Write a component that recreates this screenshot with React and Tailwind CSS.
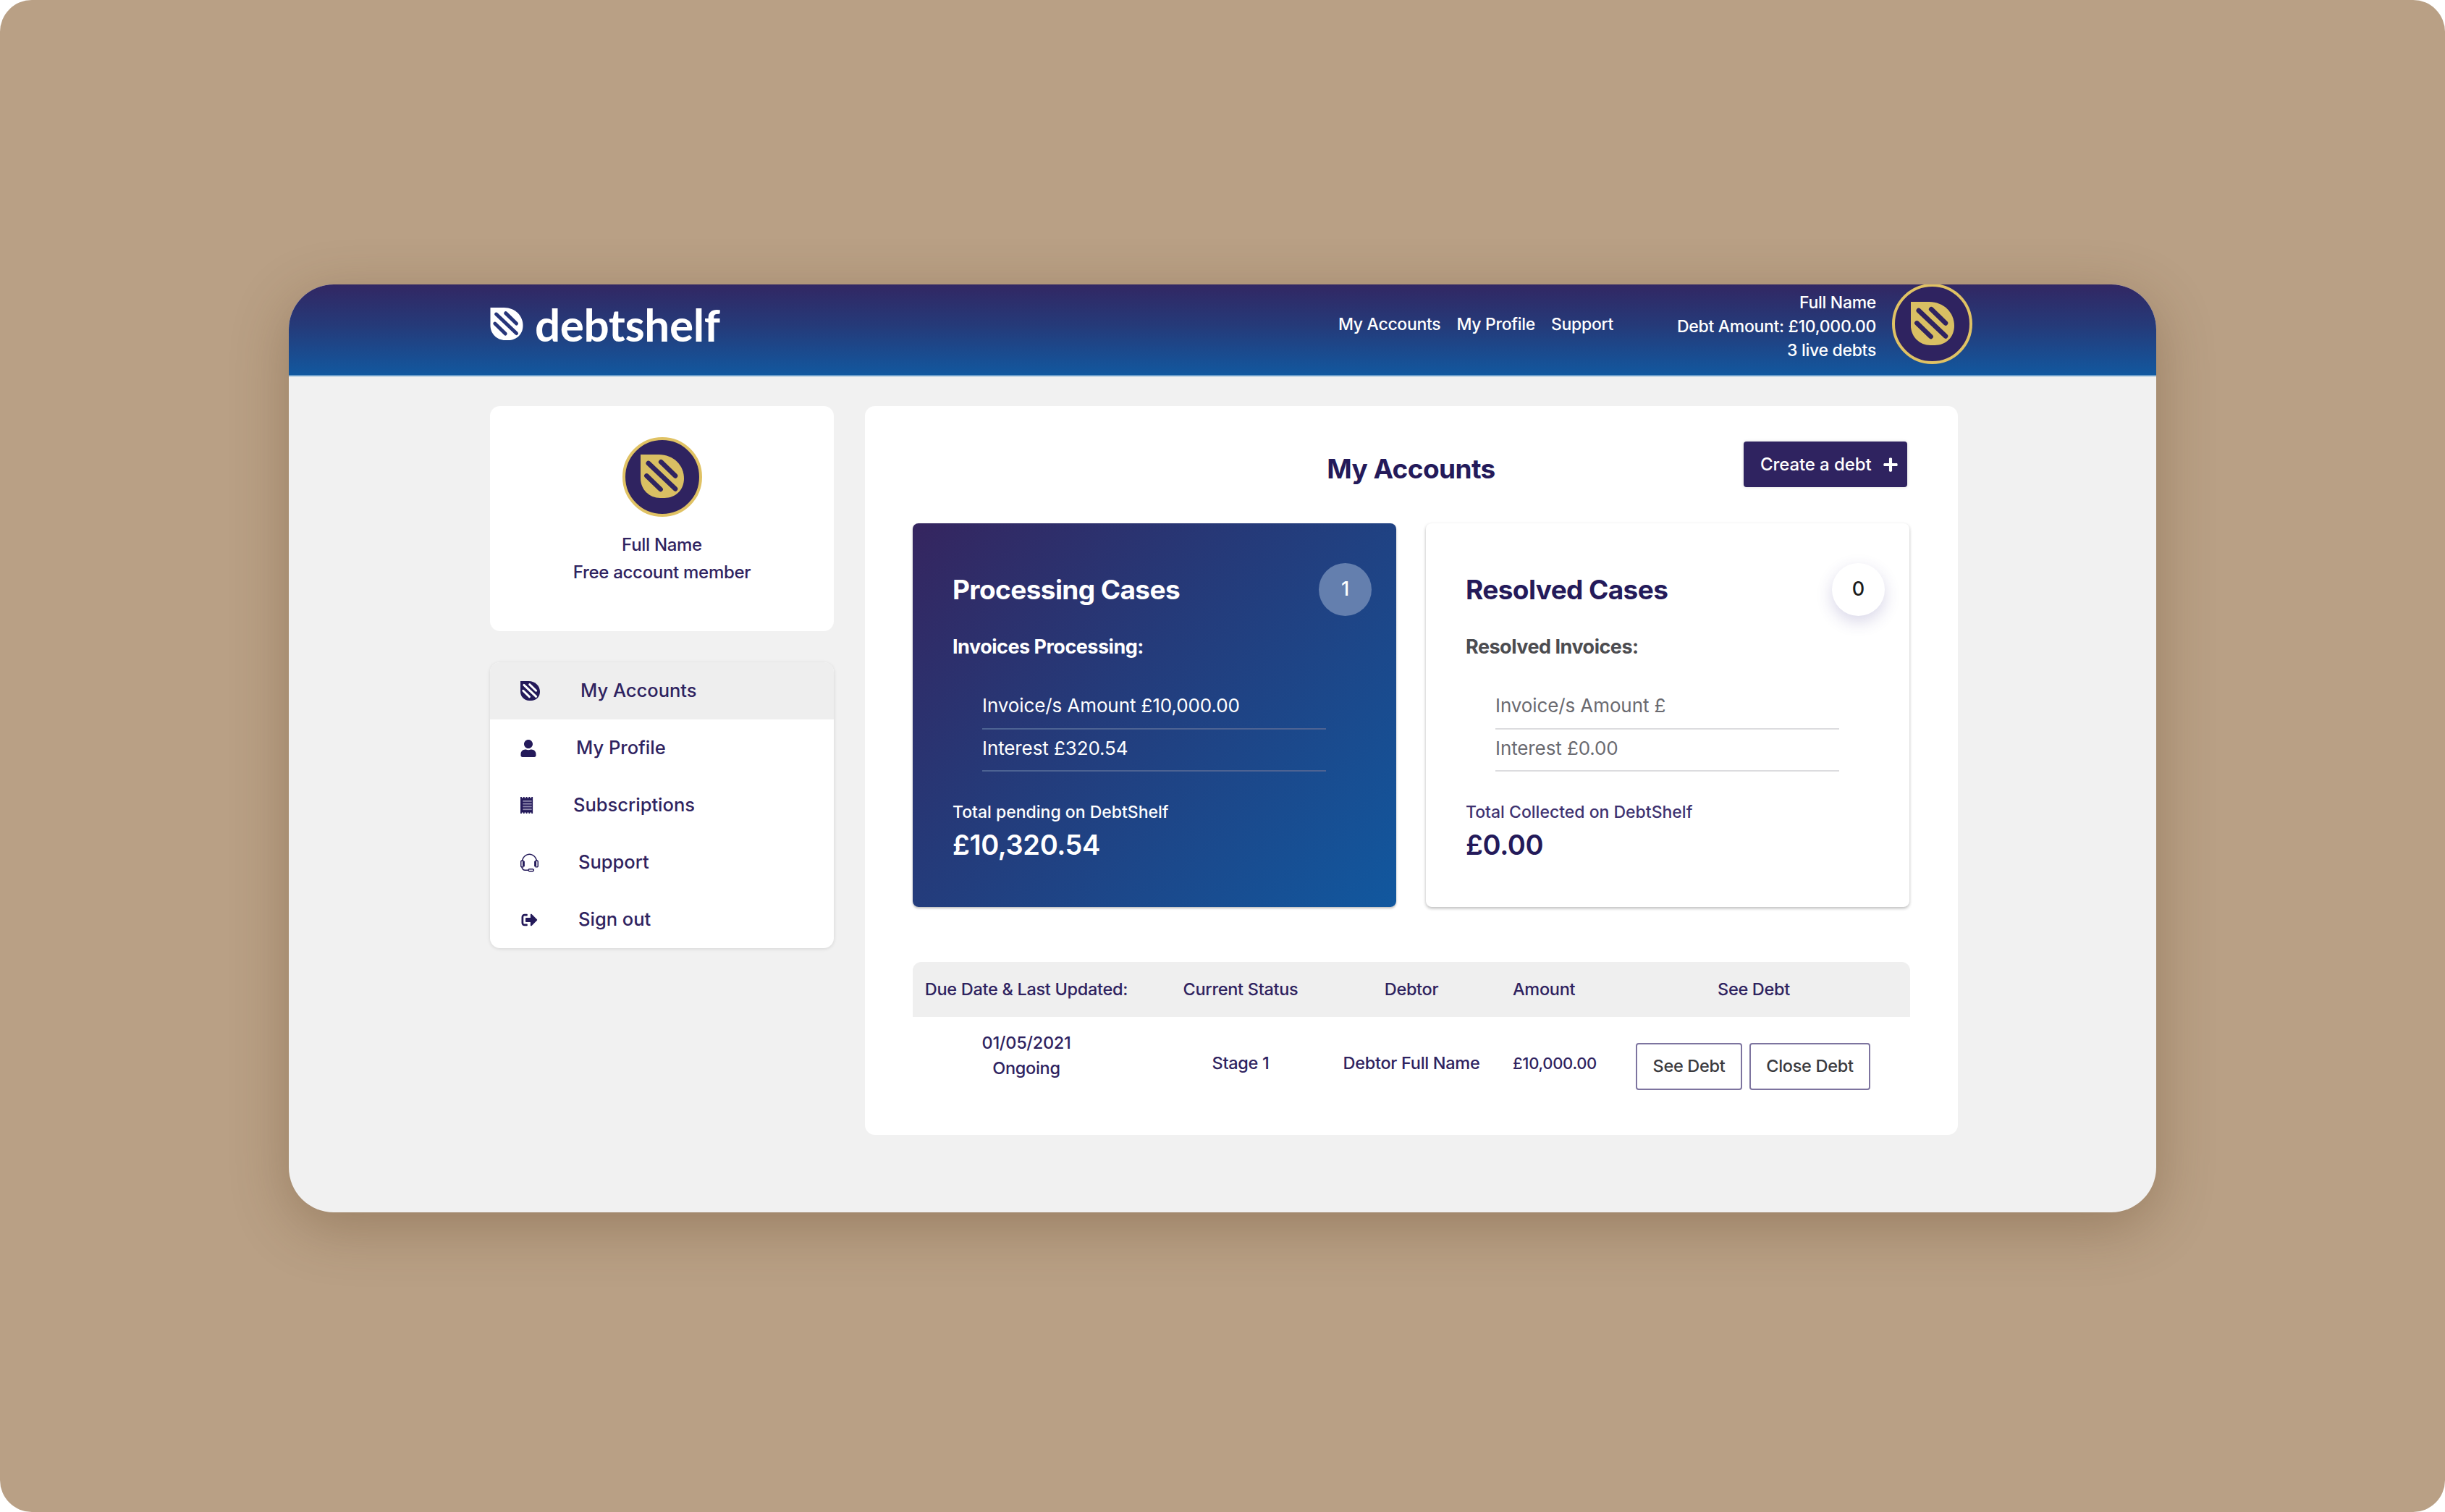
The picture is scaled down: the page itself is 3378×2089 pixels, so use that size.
import { FaUser, FaSignOutAlt, FaPlus } from "react-icons/fa";
import { TfiHeadphoneAlt } from "react-icons/tfi";

function Mark({ className, fill = "currentColor", stripe = "#2f2360" }) {
    return (
        <svg viewBox="0 0 100 100" className={className}>
            <path d="M0 0H42C76 0 100 25 100 55C100 82 80 100 55 100H45C20 100 0 80 0 55Z" fill={fill} />
            <g stroke={stripe} strokeWidth="11" strokeLinecap="round">
                <path d="M18 20L80 79" />
                <path d="M47 17L80 49" />
                <path d="M14 49L46 80" />
            </g>
        </svg>
    );
}

function Avatar({ className }) {
    return (
        <div className={`flex items-center justify-center rounded-full border-[4px] border-[#e0c264] bg-[#2f2360] ${className}`}>
            <Mark className="w-[60px] h-[62px] -translate-y-[1px]" fill="#d9bf63" />
        </div>
    );
}

function ReceiptIcon({ className }) {
    return (
        <svg viewBox="0 0 20 24" className={className} fill="currentColor">
            <path d="M0 0h2v1.500h2V0h2v1.500h2V0h2v1.500h2V0h2v1.500h2V0h2v24h-2v-1.500h-2V24h-2v-1.500h-2V24H8v-1.500H6V24H4v-1.500H2V24H0z" />
            <g fill="#8f89ad">
                <rect x="3.500" y="5" width="13" height="2" />
                <rect x="3.500" y="9" width="13" height="2" />
                <rect x="3.500" y="13" width="13" height="2" />
                <rect x="3.500" y="17" width="13" height="2" />
            </g>
        </svg>
    );
}

const menu = [
    { label: "My Accounts", text: "ml-[55px]", icon: <Mark className="w-[27px] h-[27px]" fill="#241a5a" stripe="#ffffff" /> },
    { label: "My Profile", text: "ml-[49px]", icon: <FaUser className="w-[22px] h-[24px]" /> },
    { label: "Subscriptions", text: "ml-[45px]", icon: <ReceiptIcon className="w-[19px] h-[25px]" /> },
    { label: "Support", text: "ml-[52px]", icon: <TfiHeadphoneAlt className="w-[25px] h-[26px]" /> },
    { label: "Sign out", text: "ml-[52px]", icon: <FaSignOutAlt className="w-[25px] h-[22px]" /> },
];

function CaseCard({ title, sub, amount, interest, totalLabel, total, count, dark }) {
    return (
        <div className={`relative w-[668px] h-[530px] rounded-[8px] pl-[55px] ${dark
            ? "bg-[linear-gradient(135deg,#35255f_0%,#253a79_40%,#11589f_100%)] text-white shadow-[0_2px_3px_rgba(0,0,0,0.25)]"
            : "bg-white text-[#241a5a] shadow-[0_2px_4px_rgba(0,0,0,0.28)]"}`}>
            <div className={`absolute right-[34px] top-[55px] w-[73px] h-[73px] rounded-full flex items-center justify-center text-[27px] font-medium ${dark
                ? "bg-[#647fae] text-white"
                : "bg-white text-[#1c1c1c] shadow-[0_8px_22px_rgba(60,50,140,0.2)]"}`}>
                {count}
            </div>
            <h3 className="pt-[68px] h-[132px] text-[37px] leading-[48px] font-bold tracking-[-0.6px]">{title}</h3>
            <p className={`h-[94px] pt-[23px] text-[27px] leading-[32px] font-bold tracking-[-0.5px] ${dark ? "" : "text-[#4c4c50]"}`}>{sub}</p>
            <div className={`ml-[41px] w-[475px] text-[26px] tracking-[-0.1px] ${dark ? "" : "text-[#6a6a70]"}`}>
                <div className={`h-[59px] pt-[10px] leading-[32px] border-b-[2px] ${dark ? "border-[#4d6393]" : "border-[#dcdcdf]"}`}>{amount}</div>
                <div className={`h-[58px] pt-[10px] leading-[32px] border-b-[2px] ${dark ? "border-[#4d6393]" : "border-[#dcdcdf]"}`}>{interest}</div>
            </div>
            <p className={`mt-[42px] text-[23px] leading-[28px] font-medium ${dark ? "" : "text-[#3e3270]"}`}>{totalLabel}</p>
            <p className="mt-[7px] text-[38px] leading-[48px] font-semibold tracking-[-0.4px]">{total}</p>
        </div>
    );
}

export default function App() {
    return (
        <div className="w-full h-[2089px] overflow-hidden rounded-[44px] bg-[#b9a085] pt-[393px] font-['Inter',sans-serif] text-[#2f2360]">
            <div className="mx-auto w-[2580px] h-[1282px] rounded-[62px] bg-[#f1f1f1] shadow-[0_20px_80px_rgba(80,50,20,0.3)]">
                <div className="h-full rounded-[62px] overflow-hidden">
                    <header className="h-[127px] pl-[278px] pr-[254px] flex items-center bg-[linear-gradient(180deg,#322763_0%,#253a79_45%,#12589f_100%)] border-b-[2px] border-[#6a9cc8] text-white">
                        <div className="flex items-center gap-[16px] -mt-[16px]">
                            <Mark className="w-[46px] h-[45px]" fill="#ffffff" stripe="#27357a" />
                            <span className="font-['Lato',sans-serif] text-[62px] leading-[58px] font-bold tracking-[-0.4px]">debtshelf</span>
                        </div>
                        <nav className="ml-auto flex gap-[22px] text-[23px] font-medium tracking-[-0.3px] -mt-[14px]">
                            <span>My Accounts</span>
                            <span>My Profile</span>
                            <span>Support</span>
                        </nav>
                        <div className="ml-[88px] text-right text-[23px] leading-[33px] font-medium tracking-[-0.3px] -mt-[8px]">
                            <div>Full Name</div>
                            <div>Debt Amount: £10,000.00</div>
                            <div>3 live debts</div>
                        </div>
                        <Avatar className="ml-[22px] w-[111px] h-[111px] -mt-[16px] shrink-0" />
                    </header>

                    <div className="flex gap-[43px] pl-[278px] pt-[41px]">
                        <aside className="w-[475px]">
                            <div className="h-[311px] rounded-[14px] bg-white flex flex-col items-center pt-[43px]">
                                <Avatar className="w-[110px] h-[110px]" />
                                <p className="mt-[20px] text-[24px] leading-[38px] font-medium tracking-[-0.3px]">Full Name</p>
                                <p className="text-[24px] leading-[38px] font-medium tracking-[-0.3px]">Free account member</p>
                            </div>
                            <div className="mt-[43px] rounded-[14px] overflow-hidden bg-white shadow-[0_1px_5px_rgba(0,0,0,0.12)]">
                                {menu.map((item, i) => (
                                    <div key={item.label} className={`h-[79px] pl-[42px] flex items-center ${i === 0 ? "bg-[#eeeeee]" : ""}`}>
                                        <span className="w-[28px] flex justify-start text-[#241a5a]">{item.icon}</span>
                                        <span className={`${item.text} text-[25.5px] font-medium`}>{item.label}</span>
                                    </div>
                                ))}
                            </div>
                        </aside>

                        <main className="w-[1510px] h-[1007px] rounded-[14px] bg-white pl-[66px]">
                            <div className="w-[1377px] h-[162px] pt-[49px] grid grid-cols-[1fr_auto_1fr]">
                                <span></span>
                                <h1 className="h-[63px] flex items-center text-[37px] font-bold tracking-[-0.6px] text-[#241a5a] translate-y-[6px]">My Accounts</h1>
                                <div className="flex justify-end pr-[3px]">
                                    <button className="w-[226px] h-[63px] pl-[23px] pr-[12px] rounded-[4px] bg-[#2f2360] text-white text-[24px] font-medium tracking-[-0.1px] flex items-center justify-between shadow-[0_0_4px_rgba(0,0,0,0.15)]">
                                        Create a debt
                                        <FaPlus className="w-[22px] h-[22px]" />
                                    </button>
                                </div>
                            </div>

                            <div className="flex gap-[41px]">
                                <CaseCard
                                    dark
                                    title="Processing Cases"
                                    sub="Invoices Processing:"
                                    amount="Invoice/s Amount £10,000.00"
                                    interest="Interest £320.54"
                                    totalLabel="Total pending on DebtShelf"
                                    total="£10,320.54"
                                    count="1"
                                />
                                <CaseCard
                                    title="Resolved Cases"
                                    sub="Resolved Invoices:"
                                    amount="Invoice/s Amount £"
                                    interest="Interest £0.00"
                                    totalLabel="Total Collected on DebtShelf"
                                    total="£0.00"
                                    count="0"
                                />
                            </div>

                            <div className="mt-[76px] w-[1378px] text-[23.5px] font-medium tracking-[-0.3px]">
                                <div className="h-[76px] rounded-t-[12px] bg-[#efefef] grid grid-cols-[314px_278px_194px_160px_432px] items-center text-center">
                                    <span>Due Date &amp; Last Updated:</span>
                                    <span>Current Status</span>
                                    <span>Debtor</span>
                                    <span className="text-left pl-[43px]">Amount</span>
                                    <span>See Debt</span>
                                </div>
                                <div className="h-[136px] grid grid-cols-[314px_278px_194px_160px_432px] items-center text-center">
                                    <div className="leading-[35px] -mt-[30px]">
                                        <div>01/05/2021</div>
                                        <div>Ongoing</div>
                                    </div>
                                    <span className="-mt-[8px]">Stage 1</span>
                                    <span className="-mt-[8px]">Debtor Full Name</span>
                                    <span className="text-left pl-[43px] -mt-[8px] text-[22px]">£10,000.00</span>
                                    <div className="flex justify-center gap-[10px] -translate-x-[1px]">
                                        <button className="w-[147px] h-[65px] rounded-[4px] border-[2px] border-[#7d749f] text-[#3a3a3e]">See Debt</button>
                                        <button className="w-[167px] h-[65px] rounded-[4px] border-[2px] border-[#7d749f] text-[#3a3a3e]">Close Debt</button>
                                    </div>
                                </div>
                            </div>
                        </main>
                    </div>
                </div>
            </div>
        </div>
    );
}
